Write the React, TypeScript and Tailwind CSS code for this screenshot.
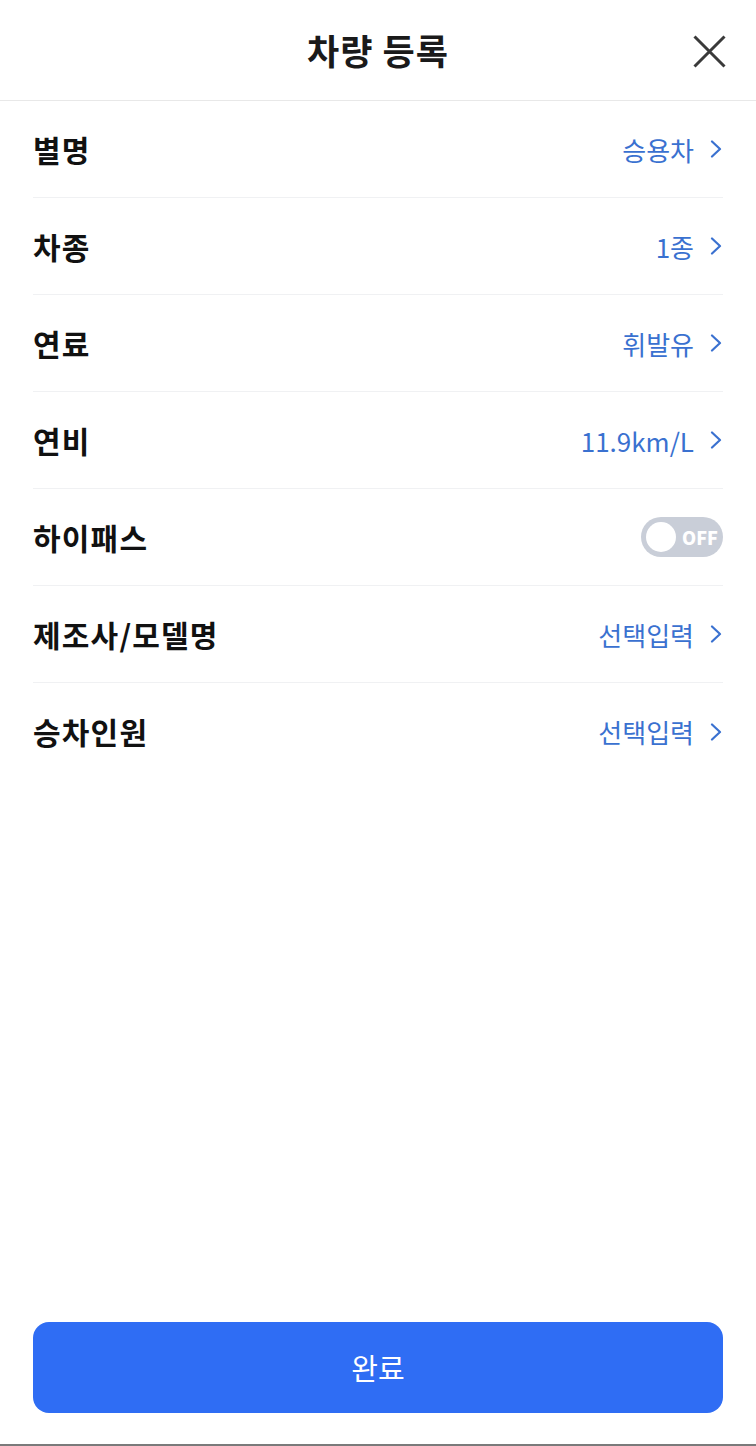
const rows = [
  { label: '별명', value: '승용차' },
  { label: '차종', value: '1종' },
  { label: '연료', value: '휘발유' },
  { label: '연비', value: '11.9km/L' },
  { label: '하이패스', toggle: true },
  { label: '제조사/모델명', value: '선택입력' },
  { label: '승차인원', value: '선택입력' },
];

function Chevron() {
  return (
    <svg width="12" height="18" viewBox="0 0 12 18" className="ml-[16px]" fill="none">
      <path d="M2 1.5 L10 9 L2 16.5" stroke="currentColor" strokeWidth="2.2" strokeLinecap="round" strokeLinejoin="round" />
    </svg>
  );
}

function Toggle() {
  return (
    <div className="flex h-[40px] w-[82px] items-center rounded-full bg-[#c9ced8] pl-[5px]">
      <div className="h-[30px] w-[30px] rounded-full bg-white" />
      <span className="ml-[6px] text-[18px] font-black leading-none text-white">OFF</span>
    </div>
  );
}

export default function App() {
  return (
    <main
      className="flex min-h-[1446px] flex-col bg-white text-[#111]"
      style={{ fontFamily: '"Noto Sans CJK KR", "Noto Sans", sans-serif' }}
    >
      <header className="relative flex h-[101px] items-center justify-center border-b border-[#e8e8e8]">
        <h1 className="text-[35px] font-bold tracking-[0.03em] text-[#1a1a1a]">차량 등록</h1>
        <button className="absolute right-[30px] top-[35px] text-[#3a3a3a]">
          <svg width="33" height="33" viewBox="0 0 33 33" fill="none">
            <path d="M1.5 1.5 L31.5 31.5 M31.5 1.5 L1.5 31.5" stroke="currentColor" strokeWidth="3" />
          </svg>
        </button>
      </header>

      <section className="px-[33px]">
        {rows.map((row, i) => (
          <div
            key={row.label}
            className={`flex h-[97px] items-center justify-between ${i < rows.length - 1 ? 'border-b border-[#f0f1f3]' : ''}`}
          >
            <span className="text-[30px] font-bold tracking-[0.04em]">{row.label}</span>
            {row.toggle ? (
              <Toggle />
            ) : (
              <span className="mr-[1px] flex items-center text-[26px] text-[#3a71d0]">
                {row.value}
                <Chevron />
              </span>
            )}
          </div>
        ))}
      </section>

      <div className="flex-1" />

      <div className="px-[33px] pb-[31px]">
        <button className="h-[91px] w-full rounded-[16px] bg-[#2f6df4] text-[29px] text-white">완료</button>
      </div>
      <div className="h-[2px] bg-[#7a7a7a]" />
    </main>
  );
}
